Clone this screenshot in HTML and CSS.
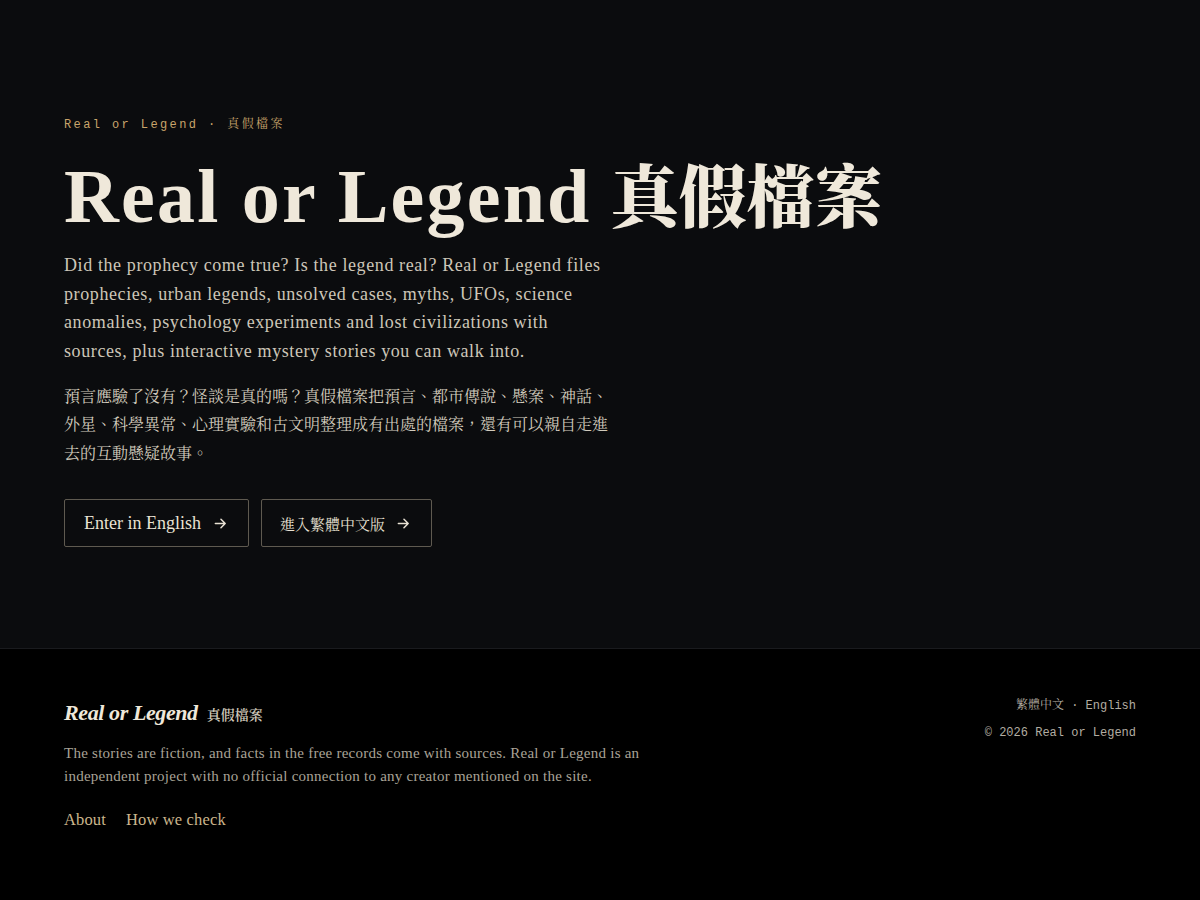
FILE: index.html
```html
<!DOCTYPE html>
<html lang="en">
<head>
<meta charset="utf-8">
<title>Real or Legend 真假檔案</title>
<link rel="stylesheet" href="styles.css">
</head>
<body>
<main class="hero">
  <p class="eyebrow">Real or Legend · <span class="zh">真假檔案</span></p>
  <h1 class="title"><span class="title-en">Real or Legend</span> <span class="zh">真假檔案</span></h1>
  <p class="lede">Did the prophecy come true? Is the legend real? Real or Legend files prophecies, urban legends, unsolved cases, myths, UFOs, science anomalies, psychology experiments and lost civilizations with sources, plus interactive mystery stories you can walk into.</p>
  <p class="lede-zh zh">預言應驗了沒有？怪談是真的嗎？真假檔案把預言、都市傳說、懸案、神話、外星、科學異常、心理實驗和古文明整理成有出處的檔案，還有可以親自走進去的互動懸疑故事。</p>
  <div class="actions">
    <a class="btn" href="#">Enter in English <svg class="arrow" viewBox="0 0 16 16" width="15" height="15"><path d="M2.5 8h10.5M8.5 3.5L13 8l-4.5 4.5" fill="none" stroke="currentColor" stroke-width="1.6" stroke-linecap="round" stroke-linejoin="round"/></svg></a>
    <a class="btn btn-zh zh" href="#">進入繁體中文版 <svg class="arrow" viewBox="0 0 16 16" width="15" height="15"><path d="M2.5 8h10.5M8.5 3.5L13 8l-4.5 4.5" fill="none" stroke="currentColor" stroke-width="1.6" stroke-linecap="round" stroke-linejoin="round"/></svg></a>
  </div>
</main>
<footer class="footer">
  <div class="foot-left">
    <div class="brand"><span class="brand-en">Real or Legend</span><span class="brand-zh zh">真假檔案</span></div>
    <p class="note">The stories are fiction, and facts in the free records come with sources. Real or Legend is an independent project with no official connection to any creator mentioned on the site.</p>
    <nav class="links"><a href="#">About</a><a href="#">How we check</a></nav>
  </div>
  <div class="foot-right">
    <p class="langs"><span class="zh">繁體中文</span> · English</p>
    <p class="copy">© 2026 Real or Legend</p>
  </div>
</footer>
</body>
</html>
```
FILE: styles.css
```css
* { box-sizing: border-box; }
html, body { margin: 0; padding: 0; }
body {
  background: #000;
  color: #ede6d8;
  font-family: "Liberation Serif", "Noto Serif CJK TC", "Noto Sans CJK TC", serif;
}
.zh { font-family: "Noto Serif CJK TC", "Noto Sans CJK TC", sans-serif; }

.hero {
  background: #0b0c0e;
  height: 649px;
  padding: 115px 64px 0;
  border-bottom: 1px solid #1a1b1e;
}
.eyebrow {
  margin: 0;
  font-family: "Liberation Mono", monospace;
  font-size: 12px;
  letter-spacing: 0.2em;
  color: #c9a56b;
  line-height: 16px;
}
.eyebrow .zh { font-size: 12px; }
.title {
  margin: 18px 0 0;
  font-size: 76px;
  line-height: 84px;
  font-weight: 700;
  color: #efe8da;
}
.title-en { letter-spacing: 2.2px; }
.title .zh { font-weight: 900; font-size: 68px; letter-spacing: 0; }
.lede {
  margin: 13px 0 0;
  max-width: 548px;
  font-size: 18px;
  line-height: 28.7px;
  letter-spacing: 0.6px;
  color: #cdc6b8;
}
.lede-zh {
  margin: 16px 0 0;
  max-width: 546px;
  font-size: 16px;
  line-height: 28.5px;
  color: #d2cbbd;
}
.actions {
  display: flex;
  gap: 12px;
  margin-top: 32px;
}
.btn {
  display: inline-flex;
  align-items: center;
  gap: 12px;
  height: 48px;
  padding: 0 20px 0 19px;
  border: 1px solid #5f5a50;
  border-radius: 2px;
  color: #e9e2d4;
  text-decoration: none;
  font-size: 18px;
  letter-spacing: 0;
}
.btn-zh { font-size: 15px; gap: 11px; padding: 0 20px 0 18px; }
.arrow { display: block; }

.footer {
  display: flex;
  justify-content: space-between;
  padding: 51px 64px 0;
  height: 251px;
  background: #000;
}
.brand { display: flex; align-items: baseline; gap: 9px; }
.brand-en {
  font-style: italic;
  font-weight: 700;
  font-size: 22px;
  letter-spacing: -0.4px;
  color: #efe8da;
}
.brand-zh { font-size: 14px; color: #cdc6b8; font-weight: 600; }
.note {
  margin: 16px 0 0;
  max-width: 600px;
  font-size: 15px;
  line-height: 23px;
  letter-spacing: 0.25px;
  color: #a9a397;
}
.links { display: flex; gap: 20px; margin-top: 22px; }
.links a {
  color: #cbb68c;
  text-decoration: none;
  font-size: 16.5px;
  letter-spacing: 0.15px;
}
.foot-right { text-align: right; margin-top: -1px; }
.langs, .copy {
  margin: 0;
  font-family: "Liberation Mono", monospace;
  font-size: 12px;
  color: #b3ada2;
  line-height: 16px;
}
.langs { line-height: 10px; }
.langs .zh { font-size: 12px; }
.copy { margin-top: 14px; }
```
